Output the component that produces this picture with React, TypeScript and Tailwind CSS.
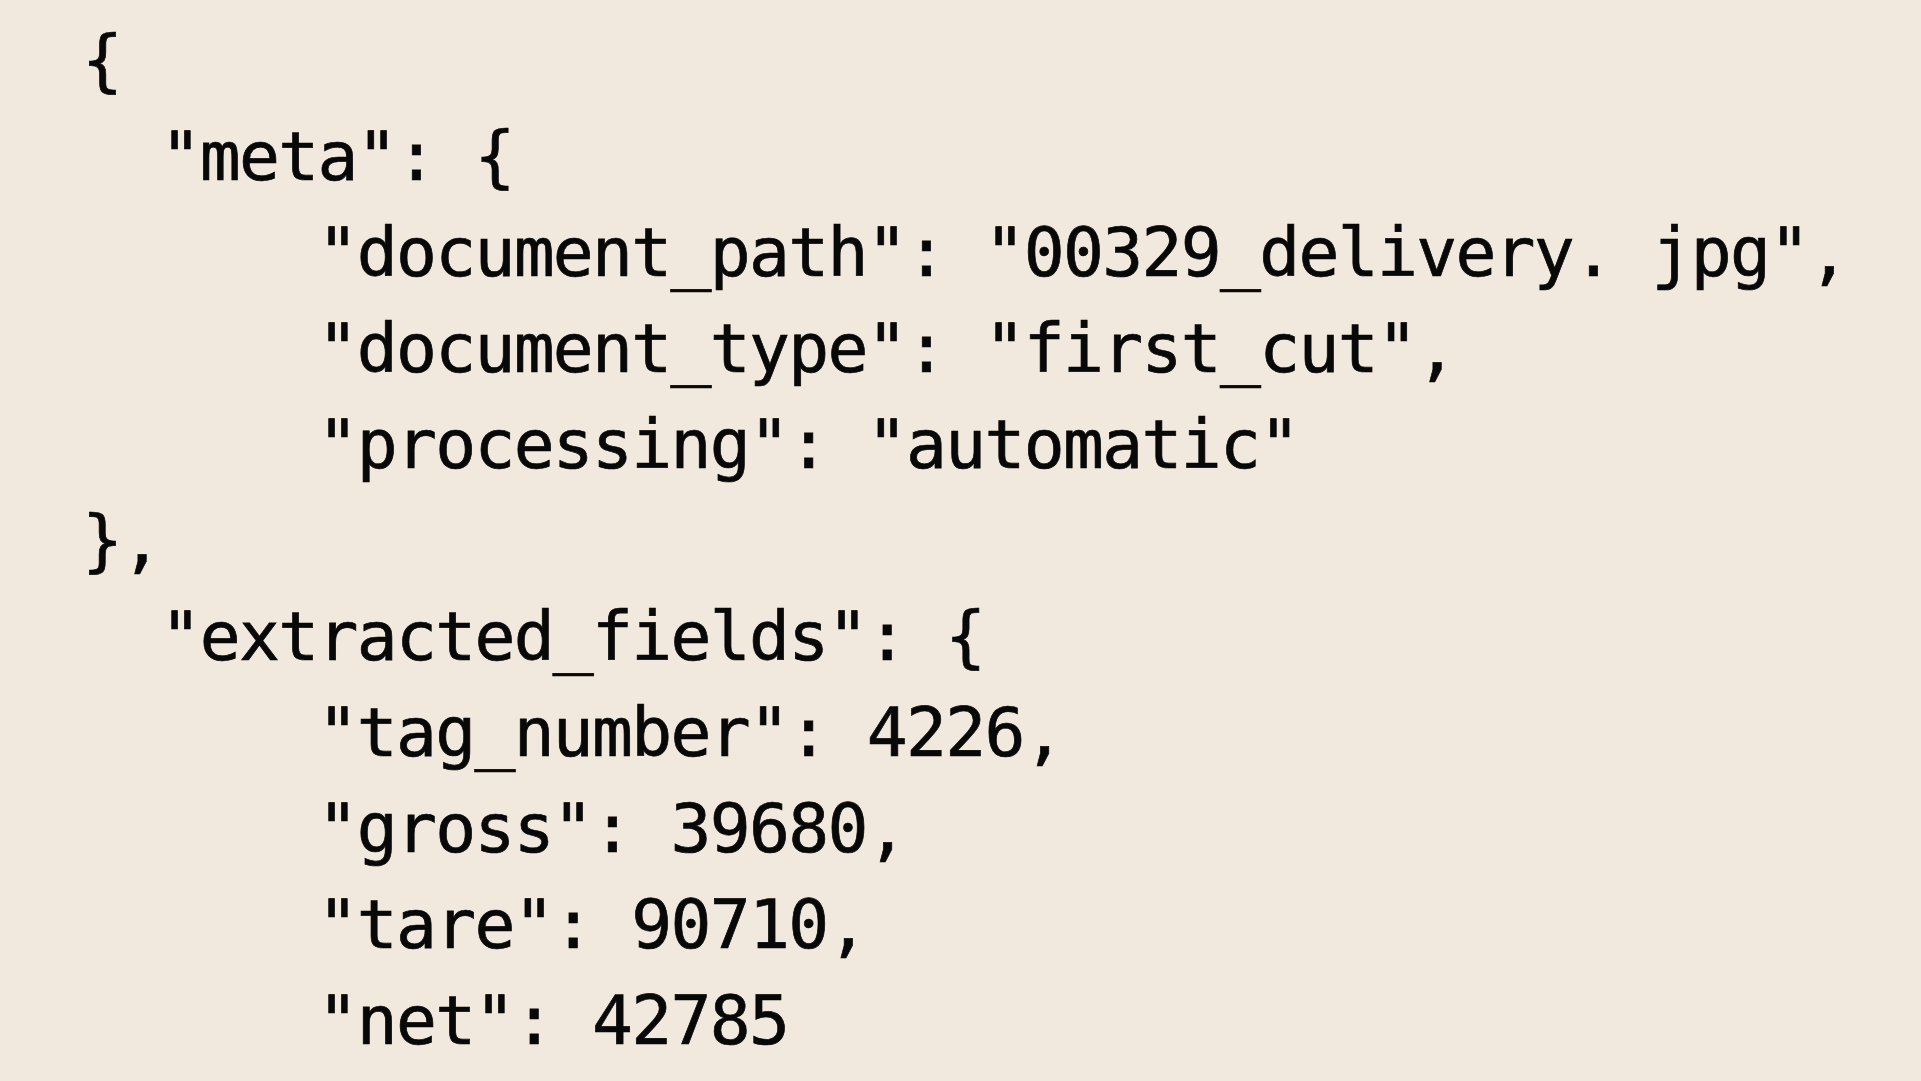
const lines = [
  "{",
  '  "meta": {',
  '      "document_path": "00329_delivery. jpg",',
  '      "document_type": "first_cut",',
  '      "processing": "automatic"',
  "},",
  '  "extracted_fields": {',
  '      "tag_number": 4226,',
  '      "gross": 39680,',
  '      "tare": 90710,',
  '      "net": 42785',
];

export default function App() {
  return (
    <div className="h-[1081px] w-full overflow-hidden bg-[#f1e9dd] pl-[82px] pt-[13px]">
      <div className="flex flex-col font-['DejaVu_Sans_Mono',monospace] text-[68px] leading-[96px] tracking-[-1.7px] text-[#080808] [-webkit-text-stroke:0.7px_#080808]">
        {lines.map((l, i) => (
          <div key={i} className="whitespace-pre">
            {l}
          </div>
        ))}
      </div>
    </div>
  );
}
